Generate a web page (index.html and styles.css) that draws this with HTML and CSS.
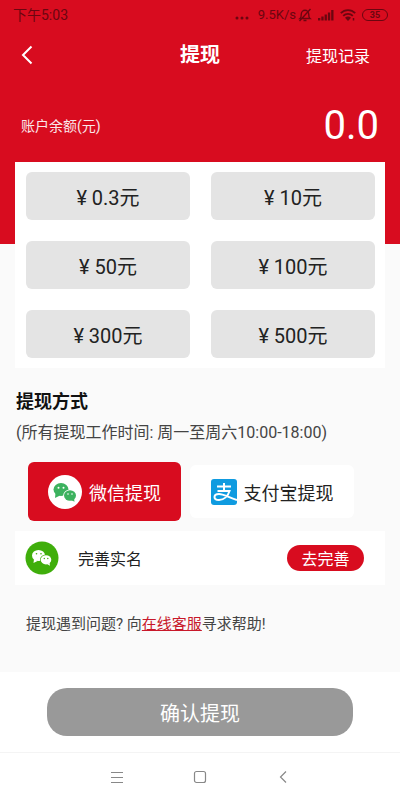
FILE: index.html
```html
<!DOCTYPE html>
<html lang="zh-CN">
<head>
<meta charset="utf-8">
<meta name="viewport" content="width=device-width, initial-scale=1">
<title>提现</title>
<link rel="stylesheet" href="styles.css">
</head>
<body>
<header class="hero">
  <div class="status">
    <span class="clock">下午5:03</span>
    <div class="status-right">
      <svg width="14" height="12" viewBox="0 0 14 12" fill="currentColor" aria-hidden="true"><circle cx="2" cy="9" r="1.5"/><circle cx="7" cy="9" r="1.5"/><circle cx="12" cy="9" r="1.5"/></svg>
      <span class="speed">9.5K/s</span>
      <svg width="14" height="14" viewBox="0 0 14 14" fill="none" stroke="currentColor" stroke-width="1.4" aria-hidden="true"><path d="M2 10.5h10c-1.200-1-1.300-2-1.300-4.500A3.700 3.700 0 0 0 3.300 6c0 2.500-.1 3.500-1.300 4.500zM5.500 12.500h3M12.500 1L1.500 13"/></svg>
      <svg width="16" height="12" viewBox="0 0 16 12" fill="currentColor" aria-hidden="true"><path d="M0 9h2.300v2.500H0zM3.300 7.500h2.300v4H3.300zM6.600 5.500h2.300v6H6.600zM9.900 3.500h2.300v8H9.900zM13.200 1h2.300v10.500h-2.300z"/></svg>
      <svg width="16" height="12" viewBox="0 0 16 12" fill="none" stroke="currentColor" stroke-width="1.800" aria-hidden="true"><path d="M.8 4.200a10 10 0 0 1 14.400 0M3.200 6.900a6.600 6.600 0 0 1 9.600 0"/><path d="M5 8.800a4.200 4.200 0 0 1 6 0L8 12z" fill="currentColor" stroke="none"/><path d="M13.500 9v2.500" stroke-width="1.500"/></svg>
      <span class="battery">35</span>
    </div>
  </div>
  <nav class="topbar">
    <button class="back" type="button" aria-label="返回"><svg width="12" height="20" viewBox="0 0 12 20" fill="none" stroke="currentColor" stroke-width="2"><path d="M10.500 1.500L2 10l8.500 8.500"/></svg></button>
    <h1>提现</h1>
    <a class="records" href="#records">提现记录</a>
  </nav>
  <div class="balance">
    <span class="balance-label">账户余额(元)</span>
    <strong class="balance-value">0.0</strong>
  </div>
</header>
<main>
  <section class="amounts" aria-label="提现金额">
    <button type="button">¥ 0.3元</button>
    <button type="button">¥ 10元</button>
    <button type="button">¥ 50元</button>
    <button type="button">¥ 100元</button>
    <button type="button">¥ 300元</button>
    <button type="button">¥ 500元</button>
  </section>
  <section class="way">
    <h2>提现方式</h2>
    <p class="note">(所有提现工作时间: 周一至周六10:00-18:00)</p>
    <div class="methods">
      <button class="method method-active" type="button">
        <svg width="34" height="34" viewBox="0 0 34 34" aria-hidden="true"><circle cx="17" cy="17" r="17" fill="#fff"/><g fill="#3cb25f"><ellipse cx="13" cy="14.500" rx="7.500" ry="6.500"/><path d="M7.500 18l-.5 5 5-2.500z"/></g><ellipse cx="22" cy="20.500" rx="6.800" ry="6" fill="#fff"/><g fill="#3cb25f"><ellipse cx="22" cy="20.500" rx="6" ry="5.200"/><path d="M23 25l3.500 1.800-.5-3.500z"/></g><g fill="#fff"><circle cx="10.500" cy="12.700" r="1"/><circle cx="15.500" cy="12.700" r="1"/><circle cx="20" cy="19" r=".8"/><circle cx="24" cy="19" r=".8"/></g></svg>
        <span>微信提现</span>
      </button>
      <button class="method" type="button">
        <svg width="26" height="26" viewBox="0 0 26 26" aria-hidden="true"><rect width="26" height="26" rx="3" fill="#0f9be0"/><g fill="none" stroke="#fff" stroke-width="2"><path d="M6 7.500h14M13 4v8M6.500 12h12c-1.500 5-5.500 9-10.500 9-3 0-4.500-1.300-4.500-3 0-2 2-3 4.500-3 5 0 9 3.500 18 6"/></g></svg>
        <span>支付宝提现</span>
      </button>
    </div>
  </section>
  <section class="verify">
    <svg width="34" height="34" viewBox="0 0 34 34" aria-hidden="true"><circle cx="17" cy="17" r="16.500" fill="#3fae0b"/><g fill="#fff"><ellipse cx="13.500" cy="14.500" rx="6.500" ry="5.500"/><path d="M9 18l-.5 4 4-2z"/></g><ellipse cx="21" cy="18.800" rx="6" ry="5.300" fill="#3fae0b"/><g fill="#fff"><ellipse cx="21" cy="18.800" rx="5.300" ry="4.600"/><path d="M22 23l3 1.700-.5-3z"/></g><g fill="#3fae0b"><circle cx="11.500" cy="12.800" r=".8"/><circle cx="16" cy="12.800" r=".8"/><circle cx="19.300" cy="17.500" r=".7"/><circle cx="22.800" cy="17.500" r=".7"/></g></svg>
    <span class="verify-label">完善实名</span>
    <button class="verify-go" type="button">去完善</button>
  </section>
  <p class="help">提现遇到问题? 向<a href="#service">在线客服</a>寻求帮助!</p>
</main>
<footer>
  <div class="submit"><button type="button">确认提现</button></div>
  <nav class="sysnav">
    <button type="button" aria-label="菜单"><svg width="12" height="12" viewBox="0 0 12 12" stroke="currentColor"><path d="M0 1.500h12M0 6.500h12M0 11.500h12"/></svg></button>
    <button type="button" aria-label="主页"><svg width="14" height="14" viewBox="0 0 14 14" fill="none" stroke="currentColor" stroke-width="1.200"><rect x="1.500" y="1.500" width="11" height="11" rx="2"/></svg></button>
    <button type="button" aria-label="返回上级"><svg width="8" height="12" viewBox="0 0 8 12" fill="none" stroke="currentColor" stroke-width="1.200"><path d="M7 .5L1.500 6 7 11.500"/></svg></button>
  </nav>
</footer>
</body>
</html>
```
FILE: styles.css
```css
* { box-sizing: border-box; }
body {
  margin: 0;
  min-height: 100vh;
  display: flex;
  flex-direction: column;
  background: #fafafa;
  color: #222;
  font-family: Roboto, "Noto Sans CJK SC", sans-serif;
}
button { border: 0; padding: 0; background: none; color: inherit; font: inherit; }
svg { display: block; flex: none; }
h1, h2, p { margin: 0; }

.hero { background: #d80c1f; color: #fff; padding-bottom: 82px; }
.status {
  display: flex;
  justify-content: space-between;
  align-items: center;
  height: 30px;
  padding: 0 12px 0 13px;
  color: #6b0610;
  font-size: 13px;
  line-height: 20px;
}
.clock { font-size: 14px; }
.status-right { display: flex; align-items: center; gap: 6px; }
.speed { margin: 0 -4px 0 3px; }
.battery {
  width: 26px;
  height: 12px;
  border: 1px solid;
  border-radius: 6px;
  font-size: 9px;
  font-weight: 700;
  line-height: 10px;
  text-align: center;
}
.topbar {
  display: grid;
  grid-template-columns: 1fr auto 1fr;
  align-items: center;
  height: 50px;
  padding: 0 30px;
}
.back { justify-self: start; margin-left: -9px; }
.topbar h1 { font-size: 20px; line-height: 28px; font-weight: 700; }
.records { justify-self: end; color: inherit; font-size: 16px; text-decoration: none; }
.balance {
  display: flex;
  justify-content: space-between;
  align-items: center;
  height: 82px;
  padding: 8px 21px 0;
}
.balance-label { font-size: 14px; opacity: .9; }
.balance-value { font-size: 40px; font-weight: 400; }

.amounts {
  display: grid;
  grid-template-columns: 1fr 1fr;
  gap: 21px;
  margin: -82px 15px 0;
  padding: 10px 10px 10px 11px;
  background: #fff;
}
.amounts button {
  height: 48px;
  border-radius: 6px;
  background: #e4e4e4;
  font-size: 20px;
}
.way { padding: 20px 16px 0; }
.way h2 { font-size: 18px; line-height: 28px; color: #111; }
.note { margin-top: 4px; font-size: 16px; line-height: 26px; color: #444; }
.methods { display: flex; align-items: center; gap: 9px; margin-top: 16px; padding: 0 30px 0 12px; }
.method {
  flex: 164;
  display: flex;
  justify-content: center;
  align-items: center;
  gap: 7px;
  height: 53px;
  border-radius: 6px;
  background: #fff;
  font-size: 18px;
}
.method-active { flex: 153; height: 59px; background: #d80c1f; color: #fff; }
.verify {
  display: flex;
  align-items: center;
  height: 54px;
  margin: 10px 15px 0;
  padding: 0 21px 0 10px;
  background: #fff;
}
.verify-label { margin-left: 19px; font-size: 16px; }
.verify-go {
  width: 77px;
  height: 26px;
  margin-left: auto;
  border-radius: 13px;
  background: #d80c1f;
  color: #fff;
  font-size: 16px;
}
.help { margin: 27px 26px 0; font-size: 15px; line-height: 24px; color: #444; }
.help a { color: #c8182a; }

footer { margin-top: auto; background: #fff; }
.submit { padding: 16px 47px; border-bottom: 1px solid #f4f4f4; }
.submit button {
  display: block;
  width: 100%;
  height: 48px;
  border-radius: 20px;
  background: #999;
  color: #fff;
  font-size: 20px;
}
.sysnav {
  display: flex;
  justify-content: space-between;
  align-items: center;
  height: 47px;
  padding: 0 108px;
  color: #888;
}
.sysnav button { display: flex; justify-content: center; width: 18px; }
```
